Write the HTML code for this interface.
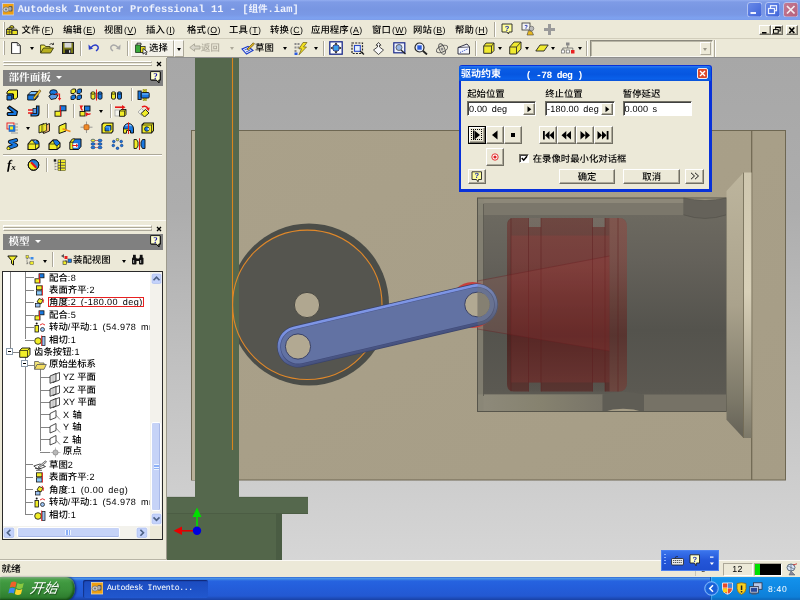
<!DOCTYPE html>
<html lang="zh-CN">
<head>
<meta charset="utf-8">
<title>Autodesk Inventor Professional 11 - [组件.iam]</title>
<style>
*{box-sizing:border-box;margin:0;padding:0}
html,body{width:800px;height:600px;overflow:hidden;background:#ece9d8}
body{position:relative;-webkit-font-smoothing:antialiased;text-rendering:geometricPrecision;font-family:"Liberation Sans","Noto Sans CJK SC",sans-serif;font-size:9.4px;color:#000;line-height:1}
#root{position:absolute;left:0;top:0;width:800px;height:600px;overflow:hidden;will-change:transform}
.a{position:absolute}
.t{position:absolute;white-space:pre;font-weight:500;font-family:"Liberation Sans","Noto Sans CJK SC",sans-serif;font-size:9.4px;line-height:12px;height:12px}
.t i{font-style:normal;font-family:"Liberation Sans",sans-serif;font-size:8.8px;letter-spacing:0.3px;margin-left:1.3px}
.m{position:absolute;white-space:pre;font-weight:500;font-family:"Liberation Mono","Noto Sans CJK SC",monospace;font-size:9.4px;line-height:12px;height:12px}
.m i{font-style:normal;font-family:"Liberation Sans",sans-serif;font-size:9.1px;letter-spacing:0.42px;word-spacing:1.7px}
#titlebar{left:0;top:0;width:800px;height:20.4px;background:linear-gradient(#93adf0 0,#7e9be6 2px,#7896e2 9px,#7a99e6 15px,#7ea2f0 18px,#7b9cea 20px)}
#titletext{left:17.700px;top:4.200px;height:12px;line-height:12px;color:#eef2fd;font-family:"Liberation Mono","Noto Sans CJK SC",monospace;font-size:10.4px;font-weight:bold;white-space:pre}
.t u{text-decoration:underline;text-decoration-thickness:0.8px;text-underline-offset:0.6px}
.sep{position:absolute;width:2px;border-left:1px solid #aca899;border-right:1px solid #fff}
.hsep{position:absolute;height:2px;border-top:1px solid #aca899;border-bottom:1px solid #fff}
.btn{position:absolute;background:#ece9d8;border:1px solid;border-color:#fff #716f64 #716f64 #fff;box-shadow:inset -1px -1px 0 #aca899}
.sunk{position:absolute;background:#fff;border:1px solid;border-color:#716f64 #fff #fff #716f64;box-shadow:inset 1px 1px 0 #404040}
.phead{position:absolute;left:3px;width:160px;height:16px;background:#808080}
.phead .t{color:#fff;font-weight:bold;font-size:9.8px}
.dd{position:absolute;width:0;height:0;border-left:2.5px solid transparent;border-right:2.5px solid transparent;border-top:3px solid #000}
.xpbtn{position:absolute;background:linear-gradient(#fff,#f3f1e8 70%,#dcd8c8);border:1px solid #6d7fa8;border-radius:2px}
</style>
</head>
<body>
<div id="root">
<div id="titlebar" class="a"></div>
<svg class="a" style="left:1.8px;top:3.2px" width="12.4" height="12.4" viewBox="0 0 12.4 12.4"><rect x="0.4" y="0.4" width="11.6" height="11.6" fill="#f0a010" stroke="#c8d4f4" stroke-width="0.8"/><rect x="6.5" y="3" width="4" height="5.5" rx="1" fill="#5a5a5a"/><ellipse cx="4" cy="6.5" rx="3" ry="2.6" fill="#c8c8c8" stroke="#666" stroke-width="0.6"/><ellipse cx="4" cy="6.5" rx="1.2" ry="1" fill="#777"/><ellipse cx="8" cy="5.8" rx="1.6" ry="2" fill="#aaa"/></svg>
<div id="titletext" class="a">Autodesk Inventor Professional 11 - [<span style="font-size:9.6px">组件</span>.iam]</div>
<svg class="a" style="left:746.5px;top:1.5px" width="15.5" height="15.5" viewBox="0 0 15.5 15.5"><defs><linearGradient id="g746" x1="0" y1="0" x2="1" y2="1"><stop offset="0" stop-color="#6a8be8"/><stop offset="1" stop-color="#3e63d8"/></linearGradient></defs><rect x="0.5" y="0.5" width="14.5" height="14.5" rx="2.5" fill="url(#g746)" stroke="#b9c8f4" stroke-width="0.9"/><rect x="3.5" y="10" width="5.5" height="2" fill="#eef2ff"/></svg>
<svg class="a" style="left:764.5px;top:1.5px" width="15.5" height="15.5" viewBox="0 0 15.5 15.5"><defs><linearGradient id="g764" x1="0" y1="0" x2="1" y2="1"><stop offset="0" stop-color="#6a8be8"/><stop offset="1" stop-color="#3e63d8"/></linearGradient></defs><rect x="0.5" y="0.5" width="14.5" height="14.5" rx="2.5" fill="url(#g764)" stroke="#b9c8f4" stroke-width="0.9"/><rect x="5.5" y="3.7" width="6" height="5" fill="none" stroke="#eef2ff" stroke-width="1.2"/><rect x="3.5" y="6.5" width="6" height="5" fill="#5074dd" stroke="#eef2ff" stroke-width="1.2"/></svg>
<svg class="a" style="left:782.5px;top:1.5px" width="15.5" height="15.5" viewBox="0 0 15.5 15.5"><defs><linearGradient id="g782" x1="0" y1="0" x2="1" y2="1"><stop offset="0" stop-color="#c47a92"/><stop offset="1" stop-color="#b5607c"/></linearGradient></defs><rect x="0.5" y="0.5" width="14.5" height="14.5" rx="2.5" fill="url(#g782)" stroke="#b9c8f4" stroke-width="0.9"/><path d="M4 4 L11.5 11.5 M11.5 4 L4 11.5" stroke="#f6eef2" stroke-width="1.7" fill="none"/></svg>
<div class="a" style="left:0;top:20px;width:800px;height:19px;background:#ece9d8"></div>
<div class="a" style="left:0;top:38px;width:800px;height:1px;background:#fbfaf5"></div>
<div class="a" style="left:0;top:37.5px;width:800px;height:0.7px;background:#d2cebc"></div>
<div class="a" style="left:2.5px;top:22px;width:2px;height:15px;border-left:1px solid #fff;border-right:1px solid #aca899"></div>
<svg class="a" style="left:5.5px;top:24.8px" width="12" height="10" viewBox="0 0 12 10"><path d="M3.5 3 Q3.5 0.6 5.8 0.6 Q8 0.6 8 3 Z" fill="#e8e020" stroke="#222" stroke-width="0.9"/><path d="M0.6 4.5 L1.8 3 H6 V4.5 M6.5 5.5 L7.5 4.2 H10.5 L11.4 5.5" fill="#f4f060" stroke="#222" stroke-width="0.8"/><rect x="0.6" y="4.5" width="5.4" height="5" fill="#e8e020" stroke="#222" stroke-width="0.9"/><rect x="6" y="5.5" width="5.4" height="4" fill="#e8e020" stroke="#222" stroke-width="0.9"/><path d="M0.6 7 H6 M3.3 4.5 V9.5" stroke="#222" stroke-width="0.6"/></svg>
<div class="t" style="left:21.5px;top:24.4px">文件<i>(<u>F</u>)</i></div>
<div class="t" style="left:63px;top:24.4px">编辑<i>(<u>E</u>)</i></div>
<div class="t" style="left:104px;top:24.4px">视图<i>(<u>V</u>)</i></div>
<div class="t" style="left:146px;top:24.4px">插入<i>(<u>I</u>)</i></div>
<div class="t" style="left:187px;top:24.4px">格式<i>(<u>O</u>)</i></div>
<div class="t" style="left:229px;top:24.4px">工具<i>(<u>T</u>)</i></div>
<div class="t" style="left:270px;top:24.4px">转换<i>(<u>C</u>)</i></div>
<div class="t" style="left:311px;top:24.4px">应用程序<i>(<u>A</u>)</i></div>
<div class="t" style="left:372px;top:24.4px">窗口<i>(<u>W</u>)</i></div>
<div class="t" style="left:413px;top:24.4px">网站<i>(<u>B</u>)</i></div>
<div class="t" style="left:455px;top:24.4px">帮助<i>(<u>H</u>)</i></div>
<div class="sep" style="left:494px;top:22px;height:15px"></div>
<svg class="a" style="left:501px;top:23px" width="12" height="12" viewBox="0 0 12 12"><path d="M1 1 H11 V9 H8 L7.5 11 L6 9 H1 Z" fill="#ffff9c" stroke="#222" stroke-width="0.9"/><text x="6" y="8" font-family="Liberation Sans,sans-serif" font-size="7.5" font-weight="bold" text-anchor="middle" fill="#1a2ab0">?</text></svg>
<svg class="a" style="left:521px;top:22px" width="15" height="14" viewBox="0 0 15 14"><rect x="1" y="1" width="8" height="7" fill="#f4f4f4" stroke="#333" stroke-width="0.8"/><text x="5" y="7" font-family="Liberation Sans,sans-serif" font-size="6" font-weight="bold" text-anchor="middle" fill="#1a2ab0">?</text><circle cx="10.5" cy="6.5" r="2.3" fill="#bbb" stroke="#555" stroke-width="0.6"/><path d="M6 13 L7.5 8.5 L11 9.5 L12.5 13 Z" fill="#e8b820" stroke="#444" stroke-width="0.6"/></svg>
<svg class="a" style="left:543px;top:23px" width="13" height="13" viewBox="0 0 13 13"><path d="M5 1 H8 V5 H12 V8 H8 V12 H5 V8 H1 V5 H5 Z" fill="#9a9a9a"/></svg>
<div class="btn" style="left:759px;top:24.5px;width:11.5px;height:10.8px"></div><svg class="a" style="left:759px;top:24.5px" width="11.5" height="10.8" viewBox="0 0 11.5 10.8"><rect x="3" y="7" width="4.5" height="1.6" fill="#000"/></svg>
<div class="btn" style="left:770.5px;top:24.5px;width:12.5px;height:10.8px"></div><svg class="a" style="left:770.5px;top:24.5px" width="12.5" height="10.8" viewBox="0 0 12.5 10.8"><rect x="4.7" y="2.2" width="4.5" height="3.8" fill="none" stroke="#000" stroke-width="1"/><rect x="2.5" y="4.6" width="4.7" height="3.6" fill="#ece9d8" stroke="#000" stroke-width="1"/><rect x="4.2" y="1.8" width="5.5" height="1.2" fill="#000"/></svg>
<div class="btn" style="left:786px;top:24.5px;width:12px;height:10.8px"></div><svg class="a" style="left:786px;top:24.5px" width="12" height="10.8" viewBox="0 0 12 10.8"><path d="M3.3 2.5 L8.3 8 M8.3 2.5 L3.3 8" stroke="#000" stroke-width="1.7"/></svg>
<div class="a" style="left:0;top:39px;width:800px;height:19px;background:#ece9d8"></div>
<div class="a" style="left:3px;top:41px;width:2px;height:14px;border-left:1px solid #fff;border-right:1px solid #aca899"></div>
<svg class="a" style="left:10.5px;top:41.5px" width="10" height="12.5" viewBox="0 0 10 12.5"><path d="M0.6 0.6 H6.3 L9.3 3.6 V11.8 H0.6 Z" fill="#fff" stroke="#222" stroke-width="1"/><path d="M6.3 0.6 V3.6 H9.3" fill="none" stroke="#222" stroke-width="0.7"/></svg>
<div class="dd" style="left:29.5px;top:47px;border-top-color:#000"></div>
<svg class="a" style="left:40px;top:42px" width="15" height="12" viewBox="0 0 15 12"><path d="M0.6 11 V3 H4.5 L5.5 4.5 H10 V6" fill="#f2ec50" stroke="#3a3a10" stroke-width="0.9"/><path d="M0.6 11 L3.5 6 H13.5 L10.5 11 Z" fill="#b8b020" stroke="#3a3a10" stroke-width="0.9"/><path d="M9.5 2.5 Q11.5 0.5 13.5 2.5 M13.5 2.5 L13.5 0.8 M13.5 2.5 L11.8 2.6" stroke="#222" stroke-width="0.8" fill="none"/></svg>
<svg class="a" style="left:62px;top:42px" width="12" height="12" viewBox="0 0 12 12"><rect x="0.5" y="0.5" width="11" height="11" fill="#7a7a18" stroke="#222" stroke-width="1"/><rect x="2.5" y="0.8" width="7" height="4.8" fill="#d8d8d8"/><rect x="3" y="7.5" width="6" height="3.8" fill="#222"/><rect x="7" y="8.2" width="1.3" height="2.5" fill="#ddd"/></svg>
<div class="sep" style="left:80px;top:41px;height:15px"></div>
<svg class="a" style="left:88px;top:43px" width="12" height="9" viewBox="0 0 12 9"><path d="M3 4.5 Q6.5 0.5 9.5 3 Q11.5 5.5 8 8" fill="none" stroke="#2a3cc8" stroke-width="1.4"/><path d="M0.5 1.5 L5 5.8 L0.8 6.8 Z" fill="#2a3cc8"/></svg>
<svg class="a" style="left:109px;top:43px" width="12" height="9" viewBox="0 0 12 9"><path d="M9 4.5 Q5.5 0.5 2.5 3 Q0.5 5.5 4 8" fill="none" stroke="#a8a8a8" stroke-width="1.4"/><path d="M11.5 1.5 L7 5.8 L11.2 6.8 Z" fill="#a8a8a8"/></svg>
<div class="sep" style="left:126.5px;top:41px;height:15px"></div>
<div class="a" style="left:130.5px;top:40px;width:43px;height:17px;border:1px solid;border-color:#fff #aca899 #aca899 #fff;background:#f3f1e9"></div>
<svg class="a" style="left:134.5px;top:42px" width="13" height="13" viewBox="0 0 13 13"><rect x="0.6" y="3" width="5" height="7.5" fill="#38a838" stroke="#1a3a1a" stroke-width="0.8"/><path d="M2 3 V1.2 H6 V3" fill="none" stroke="#222" stroke-width="0.9"/><rect x="5.6" y="4.5" width="4.5" height="6" fill="#e8e020" stroke="#222" stroke-width="0.8"/><path d="M8 6.5 L8 12.2 L9.5 10.8 L10.8 12.8 L11.8 12.2 L10.6 10.3 L12.3 10 Z" fill="#fff" stroke="#000" stroke-width="0.7"/></svg>
<div class="t" style="left:149px;top:42px">选择</div>
<div class="a" style="left:174px;top:40px;width:10px;height:17px;border:1px solid;border-color:#fff #aca899 #aca899 #fff;background:#f3f1e9"></div>
<div class="dd" style="left:176.5px;top:47.5px;border-top-color:#000"></div>
<svg class="a" style="left:188.5px;top:43px" width="12" height="9" viewBox="0 0 12 9"><path d="M0.8 4.5 L5.5 0.8 V3 H11 V6 H5.5 V8.2 Z" fill="#d8d5c8" stroke="#a8a595" stroke-width="0.9"/></svg>
<div class="t" style="left:201px;top:42px;color:#aca899">返回</div>
<div class="dd" style="left:229.5px;top:47px;border-top-color:#aca899"></div>
<svg class="a" style="left:240.5px;top:41.5px" width="14" height="13" viewBox="0 0 14 13"><path d="M1 7 L7 4.5 L12 8.5 L5.5 12 Z" fill="#e8f0ff" stroke="#1a3ac8" stroke-width="1.1"/><path d="M3.5 8 L7 6.5 M5 10 L9.5 8" stroke="#1a3ac8" stroke-width="0.8"/><path d="M6 7 L12.3 0.8 L13.5 2 L7.2 8.2 Z" fill="#e8c020" stroke="#5a4210" stroke-width="0.7"/></svg>
<div class="t" style="left:255px;top:42px">草图</div>
<div class="dd" style="left:283px;top:47px;border-top-color:#000"></div>
<svg class="a" style="left:293.5px;top:41.5px" width="14" height="13" viewBox="0 0 14 13"><g fill="#8a8a8a"><rect x="0.5" y="1" width="2" height="2"/><rect x="3.5" y="1" width="2" height="2"/><rect x="0.5" y="4.5" width="2" height="2"/><rect x="3.5" y="4.5" width="2" height="2"/><rect x="0.5" y="8" width="2" height="2"/></g><rect x="0.5" y="10.5" width="3" height="2.5" fill="#2a5ae0"/><path d="M9 0.5 L13 0.5 L9.5 5 L12.5 5 L5 12.8 L7.5 6.8 L5 6.8 Z" fill="#f2e020" stroke="#6a5a10" stroke-width="0.7"/></svg>
<div class="dd" style="left:313.5px;top:47px;border-top-color:#000"></div>
<div class="sep" style="left:322.5px;top:41px;height:15px"></div>
<svg class="a" style="left:328.5px;top:41px" width="14" height="14" viewBox="0 0 14 14"><rect x="0.8" y="0.8" width="12.4" height="12.4" fill="#fff" stroke="#1a2a8a" stroke-width="1.3"/><rect x="4.3" y="4.3" width="5.4" height="5.4" fill="#3aa0e8" stroke="#1a2a8a" stroke-width="0.6"/><path d="M7 1.5 L8.8 3.7 H5.2 Z M7 12.5 L8.8 10.3 H5.2 Z M1.5 7 L3.7 5.2 V8.8 Z M12.5 7 L10.3 5.2 V8.8 Z" fill="#111"/></svg>
<svg class="a" style="left:350.5px;top:41.5px" width="14" height="13" viewBox="0 0 14 13"><rect x="1" y="1" width="10.5" height="10.5" fill="none" stroke="#222" stroke-width="1.2" stroke-dasharray="2 1.2"/><rect x="3.5" y="3.5" width="5.8" height="5.8" fill="#e6f2ff" stroke="#2a4ac8" stroke-width="1.1"/><path d="M9 9 L13 12.5" stroke="#222" stroke-width="1.3"/></svg>
<svg class="a" style="left:372px;top:41.5px" width="13" height="13" viewBox="0 0 13 13"><path d="M6.5 0.5 L9 3.2 H7.5 V5 L11.5 8 L6.5 12.5 L1.5 8 L5.5 5 V3.2 H4 Z" fill="#f8f8f8" stroke="#222" stroke-width="0.8"/></svg>
<svg class="a" style="left:392.5px;top:41.5px" width="14" height="13" viewBox="0 0 14 13"><rect x="0.8" y="0.8" width="11" height="10" fill="#f0f4ff" stroke="#1a2a8a" stroke-width="1.2"/><circle cx="6" cy="5.5" r="3" fill="#9ab8e8" stroke="#333" stroke-width="0.7"/><path d="M8 8 L12.5 12" stroke="#222" stroke-width="1.4"/></svg>
<svg class="a" style="left:414px;top:41.5px" width="14" height="13" viewBox="0 0 14 13"><circle cx="5.5" cy="5.5" r="4.5" fill="#e8f0ff" stroke="#222" stroke-width="1.2"/><rect x="3.3" y="3.3" width="4.4" height="4.4" fill="#2a5ad8"/><path d="M8.8 8.8 L13 12.5" stroke="#222" stroke-width="1.8"/></svg>
<svg class="a" style="left:435px;top:41.5px" width="14" height="13" viewBox="0 0 14 13"><ellipse cx="7" cy="7" rx="6" ry="3" fill="none" stroke="#555" stroke-width="0.9" transform="rotate(-25 7 7)"/><ellipse cx="7" cy="7" rx="2.6" ry="5.6" fill="none" stroke="#555" stroke-width="0.9" transform="rotate(-25 7 7)"/><circle cx="7" cy="7" r="1.5" fill="#8a8a8a"/></svg>
<svg class="a" style="left:456.5px;top:41.5px" width="14" height="13" viewBox="0 0 14 13"><path d="M1 5.5 L10 2 L12.5 5 V12 H1 Z" fill="#f4f6ff" stroke="#223" stroke-width="0.9"/><path d="M1 5.5 L12.5 5" stroke="#223" stroke-width="0.7"/><path d="M3 10.5 L10.5 7" stroke="#2a4ac8" stroke-width="0.9" stroke-dasharray="1.3 1"/></svg>
<div class="sep" style="left:475px;top:41px;height:15px"></div>
<svg class="a" style="left:482.5px;top:42px" width="12" height="12" viewBox="0 0 12 12"><path d="M0.7 4 L3 1 H11 V8.5 L8.5 11.3 H0.7 Z" fill="#f0ea30" stroke="#222" stroke-width="0.9"/><path d="M0.7 4 H8.5 L11 1 M8.5 4 V11.3" fill="none" stroke="#222" stroke-width="0.8"/></svg>
<div class="dd" style="left:497.5px;top:47px;border-top-color:#000"></div>
<svg class="a" style="left:508.5px;top:41px" width="13" height="14" viewBox="0 0 13 14"><path d="M0.7 6 L5 1 H12 V8 L7.5 13 H0.7 Z" fill="#f0ea30" stroke="#222" stroke-width="0.9"/><path d="M0.7 6 H7.5 L12 1 M7.5 6 V13" fill="none" stroke="#222" stroke-width="0.8"/></svg>
<div class="dd" style="left:524.5px;top:47px;border-top-color:#000"></div>
<svg class="a" style="left:535px;top:43.5px" width="14" height="8" viewBox="0 0 14 8"><path d="M0.8 7 L5 1 H13.2 L9 7 Z" fill="#f0ea30" stroke="#222" stroke-width="0.9"/></svg>
<div class="dd" style="left:551px;top:47px;border-top-color:#000"></div>
<svg class="a" style="left:561px;top:41.5px" width="14" height="13" viewBox="0 0 14 13"><rect x="5" y="0.5" width="3.5" height="3" fill="#888"/><path d="M6.7 3.5 V6 M1.8 8 V6 H11.8 V8" fill="none" stroke="#666" stroke-width="0.8"/><rect x="0.3" y="8" width="3.2" height="3" fill="#fff" stroke="#666" stroke-width="0.7"/><rect x="5.2" y="8" width="3.2" height="3" fill="#fff" stroke="#666" stroke-width="0.7"/><rect x="10" y="8" width="3.5" height="3.5" fill="#e82020"/></svg>
<div class="dd" style="left:577.5px;top:47px;border-top-color:#000"></div>
<div class="sep" style="left:585.5px;top:41px;height:15px"></div>
<div class="a" style="left:590px;top:40px;width:122.5px;height:16.5px;border:1px solid;border-color:#8a887c #f8f7f0 #f8f7f0 #8a887c;background:#ece9d8;box-shadow:inset 1px 1px 0 #b8b5a5"></div>
<div class="a" style="left:699.5px;top:41.5px;width:11.5px;height:13.5px;border:1px solid;border-color:#fff #aca899 #aca899 #fff;background:#ece9d8"></div>
<div class="dd" style="left:702.5px;top:47.5px;border-top-color:#9a978a"></div>
<div class="sep" style="left:714px;top:40px;height:17px"></div>
<svg class="a" style="left:167px;top:58px" width="633" height="502" viewBox="167 58 633 502">
<defs>
<linearGradient id="bg" x1="0" y1="0" x2="0" y2="1"><stop offset="0" stop-color="#a7a7a7"/><stop offset="0.3" stop-color="#adadad"/><stop offset="0.6" stop-color="#c0c0c0"/><stop offset="1" stop-color="#d6d6d6"/></linearGradient>
<linearGradient id="plate" x1="0" y1="0" x2="1" y2="1"><stop offset="0" stop-color="#aaa18a"/><stop offset="1" stop-color="#a69d86"/></linearGradient>
<linearGradient id="hous" x1="0" y1="0" x2="0" y2="1"><stop offset="0" stop-color="#6f6c62"/><stop offset="0.3" stop-color="#64615a"/><stop offset="0.62" stop-color="#54534d"/><stop offset="0.9" stop-color="#5b5952"/><stop offset="1" stop-color="#65625a"/></linearGradient>
<linearGradient id="flg" x1="0" y1="0" x2="0" y2="1"><stop offset="0" stop-color="#bdb59d"/><stop offset="0.5" stop-color="#aaa28c"/><stop offset="0.85" stop-color="#7d7969"/><stop offset="1" stop-color="#646156"/></linearGradient>
<linearGradient id="flg2" x1="0" y1="0" x2="0" y2="1"><stop offset="0" stop-color="#cfc7af"/><stop offset="0.45" stop-color="#d8d0b8"/><stop offset="0.8" stop-color="#a8a18c"/><stop offset="1" stop-color="#7c7868"/></linearGradient>
<linearGradient id="leftstrip" x1="0" y1="0" x2="1" y2="0"><stop offset="0" stop-color="#c4c4c4" stop-opacity="0.4"/><stop offset="1" stop-color="#c4c4c4" stop-opacity="0"/></linearGradient>
<clipPath id="armclip"><path d="M298 346.5 L477 304.5" stroke-width="42"/></clipPath>
<linearGradient id="pshade" x1="0" y1="0" x2="0" y2="1"><stop offset="0" stop-color="#d09088" stop-opacity="0.1"/><stop offset="0.2" stop-color="#d09088" stop-opacity="0.06"/><stop offset="0.45" stop-color="#200000" stop-opacity="0.1"/><stop offset="0.68" stop-color="#200000" stop-opacity="0.26"/><stop offset="0.88" stop-color="#200000" stop-opacity="0.12"/><stop offset="1" stop-color="#200000" stop-opacity="0.04"/></linearGradient>
<linearGradient id="bwall" x1="0" y1="0" x2="1" y2="0"><stop offset="0" stop-color="#8e8a7b"/><stop offset="0.5" stop-color="#86826f"/><stop offset="1" stop-color="#787468"/></linearGradient>
<linearGradient id="armband" gradientUnits="userSpaceOnUse" x1="382.7" y1="305" x2="392.3" y2="346"><stop offset="0" stop-color="#8098e8"/><stop offset="0.15" stop-color="#7890e0"/><stop offset="0.5" stop-color="#6477b2"/><stop offset="0.85" stop-color="#4e5b8c"/><stop offset="1" stop-color="#45507c"/></linearGradient>
</defs>
<rect x="167" y="58" width="633" height="502" fill="url(#bg)"/>
<!-- plate -->
<rect x="191.5" y="130.5" width="594" height="349.5" fill="url(#plate)" stroke="#6e6752" stroke-width="1"/>
<rect x="192" y="131" width="3.5" height="349" fill="#b9b19a"/>
<line x1="751.7" y1="130" x2="751.7" y2="480" stroke="#6e6752" stroke-width="1.2"/>
<!-- housing -->
<rect x="477.5" y="198" width="249" height="213.5" fill="url(#hous)"/>
<rect x="477.5" y="198" width="206" height="17" fill="#7b776b"/>
<rect x="477.5" y="198" width="206" height="5" fill="#8d8879"/>
<rect x="477.5" y="394.5" width="249" height="17" fill="#767266"/><rect x="477.5" y="394.5" width="125" height="17" fill="url(#bwall)"/>
<rect x="477.5" y="198" width="6" height="213.5" fill="#8a8677" opacity="0.8"/><line x1="483.5" y1="204" x2="483.5" y2="396" stroke="#55534b" stroke-width="0.7"/>
<!-- top right notch -->
<path d="M683.5 198 Q705 202.5 726.5 198 L726.5 214.8 Q705 222 683.5 214.8 Z" fill="#65625a"/>
<path d="M683.5 197.5 H726.5 V198 Q705 202.5 683.5 198 Z" fill="#a89f88"/>
<path d="M683.5 198 Q705 202.5 726.5 198" fill="none" stroke="#4f4d46" stroke-width="0.6"/>
<path d="M683.5 214.8 Q705 222 726.5 214.8" fill="none" stroke="#4f4d46" stroke-width="0.6"/>
<!-- bottom notch -->
<path d="M602.5 412 L602.5 394.6 Q623 389 644 394.6 L644 412 Z" fill="#5f5d55"/>
<path d="M602.5 412.2 Q623 405.5 644 412.2 Z" fill="#a79e87"/>
<rect x="477.5" y="198" width="249" height="213.5" fill="none" stroke="#57554b" stroke-width="1"/>
<!-- piston (transparent red) -->
<g>
<path d="M514 218 H528.5 V227 H541 V218 H592.5 V227 H605 V218 H619 Q627 218 627 227 V382.5 Q627 391.5 619 391.5 H605 V382.5 H592.5 V391.5 H541 V382.5 H528.5 V391.5 H514 Q507 391.5 507 384 V225.5 Q507 218 514 218 Z" fill="#5c1614" fill-opacity="0.5"/>
<rect x="511" y="235.5" width="98.5" height="147" fill="#a03c3c" fill-opacity="0.27"/>
<path d="M609.5 218 H619 Q627 218 627 227 V382.5 Q627 391.5 619 391.5 H609.5 Z" fill="#d8a898" fill-opacity="0.16"/>
<rect x="507" y="218" width="120" height="173.5" rx="8" fill="url(#pshade)"/>
<g stroke="#5a1a1c" stroke-opacity="0.45" stroke-width="1">
<line x1="511" y1="218" x2="511" y2="391.5"/><line x1="528.5" y1="218" x2="528.5" y2="391.5"/><line x1="541" y1="218" x2="541" y2="391.5"/><line x1="592.5" y1="218" x2="592.5" y2="391.5"/><line x1="605" y1="218" x2="605" y2="391.5"/><line x1="618" y1="218" x2="618" y2="391.5"/>
</g>
<polygon points="477.5,281 609.5,256 609.5,351 477.5,329" fill="#d04848" fill-opacity="0.13"/>
<polyline points="477.5,281 609.5,256" stroke="#6a2022" stroke-opacity="0.5" fill="none" stroke-width="0.8"/>
<polyline points="477.5,329 609.5,351" stroke="#6a2022" stroke-opacity="0.5" fill="none" stroke-width="0.8"/>
</g>
<!-- pin red blob -->
<circle cx="472.5" cy="305" r="23" fill="#c8403c"/>
<!-- flange -->
<polygon points="726.5,191 743.5,172.5 743.5,438 726.5,419.7" fill="url(#flg)"/>
<rect x="743.5" y="172.5" width="8" height="265.5" fill="url(#flg2)"/>
<line x1="743.5" y1="172.5" x2="743.5" y2="438" stroke="#6e6752" stroke-width="0.8"/>
<!-- disc -->
<ellipse cx="309" cy="304.5" rx="80" ry="81" fill="#4b4d48"/>
<circle cx="307.3" cy="304.8" r="74.7" fill="#55554f"/>
<circle cx="307" cy="305" r="12.6" fill="#b0a790" stroke="#3c3c38" stroke-width="0.8"/>
<!-- green bar & base -->
<rect x="195" y="58" width="44" height="440" fill="#55684d"/>
<line x1="232.5" y1="58" x2="232.5" y2="450" stroke="#d8861e" stroke-width="1.1"/>
<rect x="167" y="497" width="141" height="17" fill="#55684d"/>
<rect x="167" y="513.5" width="115" height="47" fill="#53664a"/>
<rect x="276" y="513.5" width="6" height="47" fill="#4a5c43"/>
<line x1="167" y1="513.5" x2="308" y2="513.5" stroke="#4a5b42" stroke-width="0.8"/>
<line x1="167" y1="497.3" x2="195" y2="497.3" stroke="#4a5b42" stroke-width="0.6"/>
<line x1="239" y1="497.3" x2="308" y2="497.3" stroke="#4a5b42" stroke-width="0.6"/>
<circle cx="307.3" cy="304.8" r="74.7" fill="none" stroke="#e0882a" stroke-width="1.1"/>
<!-- arm -->
<path d="M298 346.5 L477 304.5" stroke="#3a446c" stroke-width="42" stroke-linecap="round" fill="none"/>
<path d="M298 346.5 L477 304.5" stroke="url(#armband)" stroke-width="40.8" stroke-linecap="round" fill="none"/>
<path d="M298 346.5 L477 304.5" stroke="#3c4673" stroke-opacity="0.75" stroke-width="35.6" stroke-linecap="round" fill="none"/>
<path d="M298 346.5 L477 304.5" stroke="#6272a3" stroke-width="34.2" stroke-linecap="round" fill="none"/>
<circle cx="298" cy="346.5" r="12.6" fill="#b2a992" stroke="#2f3862" stroke-width="0.9"/>
<circle cx="477" cy="304.5" r="12.3" fill="#b2a992" stroke="#2f3862" stroke-width="0.9"/>
<path d="M477.5 292.2 A12.3 12.3 0 0 1 477.5 316.8 Z" fill="#8c8676"/>
<path d="M477.5 283.5 A21 21 0 0 1 477.5 325.5 Z" fill="#77746a" fill-opacity="0.3"/>
<!-- triad -->
<line x1="197" y1="530.8" x2="197" y2="515" stroke="#00e000" stroke-width="1.6"/>
<polygon points="197,507.5 192.5,517 201.5,517" fill="#00e000"/>
<line x1="197" y1="530.8" x2="181" y2="530.8" stroke="#e00000" stroke-width="1.6"/>
<polygon points="173.5,530.8 182,526.5 182,535" fill="#e80000"/>
<circle cx="197" cy="530.8" r="4.2" fill="#0000e0"/>
</svg>

<div class="a" style="left:167px;top:57.3px;width:633px;height:1px;background:#8e8e8e"></div>
<div class="a" style="left:166.3px;top:58px;width:1px;height:502px;background:#9d9a8c"></div>
<div class="a" style="left:3px;top:60.5px;width:149px;height:2.4px;border:1px solid;border-color:#fff #aca899 #aca899 #fff"></div><div class="a" style="left:3px;top:63.5px;width:149px;height:2.4px;border:1px solid;border-color:#fff #aca899 #aca899 #fff"></div><svg class="a" style="left:155.5px;top:61px" width="6" height="6" viewBox="0 0 6 6"><path d="M1 1 L5 5 M5 1 L1 5" stroke="#000" stroke-width="1.3"/></svg>
<div class="phead" style="top:69.5px"></div><div class="t" style="left:8.5px;top:72.8px;color:#fff;font-weight:bold;font-size:10.6px;font-family:'Liberation Serif','Noto Serif CJK SC',serif">部件面板</div><div class="dd" style="left:55.5px;top:76px;border-top-color:#fff;border-left-width:3.2px;border-right-width:3.2px;border-top-width:3.5px"></div><svg class="a" style="left:149.5px;top:71px" width="11.5" height="12.5" viewBox="0 0 11.5 12.5"><path d="M0.6 0.6 H10.2 V9 H8.8 L9 11.8 L6.3 9 H0.6 Z" fill="#ffffd0" stroke="#1a1a1a" stroke-width="1"/><path d="M1.2 9.3 H6.3 L9 12 L9.2 9.3 H10.5 V1.2" fill="none" stroke="#000" stroke-width="0.6"/><text x="5.4" y="8" font-family="Liberation Serif,serif" font-size="9" font-weight="bold" text-anchor="middle" fill="#1a1ab0">?</text></svg>
<svg class="a" style="left:5.8px;top:88.7px" width="13" height="12" viewBox="0 0 13 12"><path d="M1 3 L3 1 H11.5 V8.5 L9.5 10 H7.5 V5 H1 Z" fill="#f2ee28" stroke="#111" stroke-width="1"/><path d="M1 6.5 L2.5 5 H7 V9.5 L5.5 11 H1 Z" fill="#1878e0" stroke="#111" stroke-width="1"/><path d="M1 6.5 H5.5 V11 M5.5 6.5 L7 5" fill="none" stroke="#111" stroke-width="0.7"/></svg>
<svg class="a" style="left:26.5px;top:88.7px" width="15" height="12" viewBox="0 0 15 12"><path d="M0.7 6 L4 2.5 H11 L8 6 Z" fill="#7ac0ff" stroke="#111" stroke-width="0.9"/><path d="M0.7 6 H8 V11 H0.7 Z" fill="#1878e0" stroke="#111" stroke-width="0.9"/><path d="M8 6 L11 2.5 V7.5 L8 11 Z" fill="#0a4aa0" stroke="#111" stroke-width="0.9"/><path d="M6 9 L12.5 0.8 L14 2 L7.5 10.2 Z" fill="#f0c830" stroke="#5a4010" stroke-width="0.6"/></svg>
<svg class="a" style="left:47.5px;top:88.7px" width="14" height="12" viewBox="0 0 14 12"><ellipse cx="5.5" cy="3.5" rx="3.8" ry="2.8" fill="#1878e0" stroke="#111" stroke-width="0.9"/><path d="M0.8 7 L4 5 L10 6 L8 9.5 L3 10.5 Z" fill="#5a9ae8" stroke="#111" stroke-width="0.9"/><path d="M7 5 H11.5 V9.5" fill="none" stroke="#e81818" stroke-width="1.2"/><path d="M9.8 9 H13.2 L11.5 11.8 Z" fill="#e81818"/></svg>
<svg class="a" style="left:69.75px;top:88.45px" width="12.5" height="12.5" viewBox="0 0 12.5 12.5"><path d="M1 2.5 L2.5 1 H5.5 V4 L4 5.5 H1 Z" fill="#f2ee28" stroke="#111" stroke-width="0.9"/><path d="M7 2.5 L8.5 1 H11.5 V4 L10 5.5 H7 Z" fill="#1878e0" stroke="#111" stroke-width="0.9"/><path d="M1 8.5 L2.5 7 H5.5 V10 L4 11.5 H1 Z" fill="#1878e0" stroke="#111" stroke-width="0.9"/><path d="M7 8.5 L8.5 7 H11.5 V10 L10 11.5 H7 Z" fill="#1878e0" stroke="#111" stroke-width="0.9"/></svg>
<svg class="a" style="left:90.2px;top:88.7px" width="13" height="12" viewBox="0 0 13 12"><path d="M1 4 V9 A2 1.2 0 0 0 5 9 V4 Z" fill="#f2ee28" stroke="#111" stroke-width="0.9"/><ellipse cx="3" cy="4" rx="2" ry="1.2" fill="#f2ee28" stroke="#111" stroke-width="0.8"/><path d="M8 4 V9 A2 1.2 0 0 0 12 9 V4 Z" fill="#1878e0" stroke="#111" stroke-width="0.9"/><ellipse cx="10" cy="4" rx="2" ry="1.2" fill="#1878e0" stroke="#111" stroke-width="0.8"/><line x1="6.5" y1="0.5" x2="6.5" y2="11.5" stroke="#e81818" stroke-width="1"/></svg>
<svg class="a" style="left:110.2px;top:88.7px" width="13" height="12" viewBox="0 0 13 12"><path d="M1.5 4 V9 A2 1.2 0 0 0 5.5 9 V4 Z" fill="#f2ee28" stroke="#111" stroke-width="0.9"/><ellipse cx="3.5" cy="4" rx="2" ry="1.2" fill="#f2ee28" stroke="#111" stroke-width="0.8"/><path d="M7.5 4 V9 A2 1.2 0 0 0 11.5 9 V4 Z" fill="#1878e0" stroke="#111" stroke-width="0.9"/><ellipse cx="9.5" cy="4" rx="2" ry="1.2" fill="#1878e0" stroke="#111" stroke-width="0.8"/></svg>
<div class="sep" style="left:130.5px;top:88px;height:13px"></div>
<svg class="a" style="left:137px;top:88.7px" width="13" height="12" viewBox="0 0 13 12"><rect x="6" y="0.5" width="3.5" height="11" fill="#f2ee28" stroke="#8a8a20" stroke-width="0.5"/><path d="M6 0.5 L9.5 3 M9.5 0.5 L6 3 M6 9 L9.5 11.5 M9.5 9 L6 11.5" stroke="#7a7a10" stroke-width="0.6"/><rect x="1" y="2" width="3.2" height="8.5" fill="#1878e0" stroke="#111" stroke-width="0.9"/><rect x="4.2" y="3.5" width="8" height="5.5" rx="1" fill="#1878e0" stroke="#111" stroke-width="0.9"/><path d="M5 5 H11.5" stroke="#8ac8ff" stroke-width="0.9"/></svg>
<svg class="a" style="left:5.8px;top:105px" width="13" height="12" viewBox="0 0 13 12"><path d="M1.5 3 L3.5 1 L11.5 6.5 L10.5 10.5 H2 Q0.5 9 2 7.5 H7 Z" fill="#1878e0" stroke="#111" stroke-width="1.2" stroke-linejoin="round"/></svg>
<svg class="a" style="left:27px;top:105px" width="13" height="12" viewBox="0 0 13 12"><path d="M9.5 1 H12 V8 Q12 11 9 11 H4 V8.5 H9.5 Z" fill="#1878e0" stroke="#111" stroke-width="1.1"/><path d="M1 5 H8 M1 8 H6" stroke="#e81818" stroke-width="1.3"/><rect x="6" y="3.5" width="3.5" height="5" fill="#5a9ae8" stroke="#111" stroke-width="0.7"/></svg>
<div class="sep" style="left:46.5px;top:104px;height:14px"></div>
<svg class="a" style="left:53.5px;top:105px" width="13" height="12" viewBox="0 0 13 12"><rect x="6" y="0.8" width="6" height="5" fill="#1878e0" stroke="#111" stroke-width="0.9"/><rect x="1" y="6.2" width="6" height="5" fill="#f2ee28" stroke="#111" stroke-width="0.9"/><path d="M6.5 1 V11" stroke="#e81818" stroke-width="0.9"/></svg>
<div class="sep" style="left:72.5px;top:104px;height:14px"></div>
<svg class="a" style="left:78px;top:105px" width="14" height="12" viewBox="0 0 14 12"><rect x="6.5" y="1" width="5.5" height="5" fill="#1878e0" stroke="#111" stroke-width="0.9"/><rect x="2" y="6.5" width="5" height="4.5" fill="#f2ee28" stroke="#111" stroke-width="0.9"/><path d="M4.5 5.5 Q2 3 3.5 0.8" fill="none" stroke="#e81818" stroke-width="1.3"/><path d="M1.5 0.5 L5.5 0.5 L3 3.5 Z" fill="#e81818"/><path d="M8 8 Q10.5 10.5 12.5 8.5" fill="none" stroke="#e81818" stroke-width="1.3"/><path d="M8 11.5 L7.5 7.5 L11 9 Z" fill="#e81818"/></svg>
<div class="dd" style="left:98.5px;top:110px;border-top-color:#000"></div>
<div class="sep" style="left:109.5px;top:104px;height:14px"></div>
<svg class="a" style="left:114px;top:105px" width="13" height="12" viewBox="0 0 13 12"><rect x="1" y="5" width="5" height="6" fill="#f4f4ee" stroke="#999" stroke-width="0.7"/><path d="M5.5 6 L7 4.5 H12 V9.5 L10.5 11.3 H5.5 Z" fill="#f2ee28" stroke="#111" stroke-width="0.9"/><path d="M5.5 6 H10.5 V11.3 M10.5 6 L12 4.5" fill="none" stroke="#111" stroke-width="0.7"/><path d="M1 2.2 H8.5" stroke="#e81818" stroke-width="1.6"/><path d="M8 0 L11.5 2.2 L8 4.4 Z" fill="#e81818"/></svg>
<svg class="a" style="left:137px;top:104.75px" width="13" height="12.5" viewBox="0 0 13 12.5"><path d="M1 7 L4.5 3.5 L8 7 L4.5 10.5 Z" fill="#f0f0e8" stroke="#999" stroke-width="0.7"/><path d="M4 8.5 L8.5 4.5 L12 8 L7.5 12 Z" fill="#f2ee28" stroke="#111" stroke-width="0.9"/><path d="M5 2 Q9 0 11 3.5" fill="none" stroke="#e81818" stroke-width="1.6"/><path d="M9 3.5 L12.8 2.5 L11.8 6 Z" fill="#e81818"/></svg>
<svg class="a" style="left:5.5px;top:121.5px" width="13" height="12" viewBox="0 0 13 12"><rect x="1" y="1" width="7" height="6" fill="none" stroke="#e81818" stroke-width="0.9"/><rect x="3" y="3.5" width="6" height="6" fill="#1878e0" stroke="#3a6ab0" stroke-width="0.7"/><rect x="4" y="4.5" width="3" height="3" fill="#f2ee28"/><path d="M9 2 H12 M9 5 H12 M9 8 H12 M5 11 H12" stroke="#888" stroke-width="0.8"/></svg>
<div class="dd" style="left:26px;top:126.5px;border-top-color:#000"></div>
<svg class="a" style="left:37.5px;top:121.5px" width="13" height="12" viewBox="0 0 13 12"><path d="M1 3.5 L6 1.5 V9 L1 11 Z" fill="#f2ee28" stroke="#111" stroke-width="0.9"/><path d="M5.5 4 L11.5 1.5 V9 L5.5 11.5 Z" fill="#f0b070" stroke="#111" stroke-width="0.9"/><path d="M4 2.8 L8.5 1 V8.5 L4 10.5 Z" fill="#f2ee28" fill-opacity="0.85" stroke="#111" stroke-width="0.7"/></svg>
<svg class="a" style="left:58px;top:121.5px" width="13" height="12" viewBox="0 0 13 12"><path d="M1 4 L8 1 V9 L1 11.5 Z" fill="#f2ee28" stroke="#111" stroke-width="1"/><path d="M4.5 6.8 L12.5 9.5" stroke="#f08a18" stroke-width="1.5"/></svg>
<svg class="a" style="left:79.5px;top:121.25px" width="13" height="12.5" viewBox="0 0 13 12.5"><path d="M6.5 0.5 V12 M0.5 6.2 H12.5" stroke="#888" stroke-width="0.8"/><rect x="4" y="3.7" width="5" height="5" rx="1" fill="#f08a28" stroke="#a05010" stroke-width="0.7"/></svg>
<svg class="a" style="left:100.5px;top:121.5px" width="13" height="12" viewBox="0 0 13 12"><path d="M1 2.5 L2.5 1 H12 V9 L10.5 11 H1 Z" fill="#f2ee28" stroke="#111" stroke-width="1.1"/><path d="M4 5 L5.5 3.5 H10 V7.5 L8.5 9 H4 Z" fill="#1878e0" stroke="#111" stroke-width="0.8"/><path d="M4 5 H8.5 V9" fill="none" stroke="#7ac0ff" stroke-width="0.7"/></svg>
<svg class="a" style="left:121.5px;top:121.5px" width="13" height="12" viewBox="0 0 13 12"><path d="M1.5 7 A5 5.5 0 0 1 11.5 7 V11 H8.5 V8.5 H4.5 V11 H1.5 Z" fill="#1878e0" stroke="#111" stroke-width="1"/><path d="M1.5 7 H6.5 V8.5 H4.5 V11 H1.5 Z" fill="#f2ee28" stroke="#111" stroke-width="0.7"/><path d="M3.5 4 Q6.5 1.8 9.5 4" fill="none" stroke="#8ac8ff" stroke-width="1.1"/><path d="M6.5 0.3 V12" stroke="#e81818" stroke-width="1"/></svg>
<svg class="a" style="left:141px;top:121.5px" width="13" height="12" viewBox="0 0 13 12"><path d="M1 3 L3 1 H12.5 V8.5 L10.5 11 H1 Z" fill="#f2ee28" stroke="#111" stroke-width="1.1"/><path d="M1 3 H10.5 V11 M10.5 3 L12.5 1" fill="none" stroke="#111" stroke-width="0.7"/><circle cx="5.8" cy="7" r="2.3" fill="#1878e0" stroke="#111" stroke-width="0.7"/><path d="M5.8 7 L8 6 V8 Z" fill="#fff"/></svg>
<svg class="a" style="left:5.5px;top:138px" width="13" height="12" viewBox="0 0 13 12"><polyline points="10,2.2 4,3.8 10,7.3 3.5,9.5" fill="none" stroke="#111" stroke-width="4.2" stroke-linejoin="round" stroke-linecap="round"/><polyline points="10,2.2 4,3.8 10,7.3 3.5,9.5" fill="none" stroke="#1878e0" stroke-width="2.4" stroke-linejoin="round" stroke-linecap="round"/><circle cx="2.5" cy="10.3" r="1.6" fill="#f2ee28" stroke="#111" stroke-width="0.7"/></svg>
<svg class="a" style="left:27px;top:138px" width="13" height="12" viewBox="0 0 13 12"><path d="M1 6 L4.5 2 H9 Q12 2.5 12 6 V9 L9 11.5 H1 Z" fill="#f2ee28" stroke="#111" stroke-width="1.1"/><path d="M1 6 H8.5 V11.5" fill="none" stroke="#111" stroke-width="0.7"/><path d="M5.5 2.3 H9 Q11.7 2.8 11.7 6 L8.7 6.2 Q8.5 5 7.5 5.2 Z" fill="#1878e0" stroke="#111" stroke-width="0.6"/><path d="M7.5 3.2 L9 2.8" stroke="#b8e0ff" stroke-width="0.8"/></svg>
<svg class="a" style="left:48px;top:138px" width="13" height="12" viewBox="0 0 13 12"><path d="M1 6 L5 2 H9 L12 5 V9 L9 11.5 H1 Z" fill="#f2ee28" stroke="#111" stroke-width="1.1"/><path d="M1 6 H6.5 L9 8 V11.5" fill="none" stroke="#111" stroke-width="0.7"/><path d="M5 2 H9 L12 5 L9 8 L6.5 6 Z" fill="#1878e0" stroke="#111" stroke-width="0.7"/></svg>
<svg class="a" style="left:69px;top:138px" width="13" height="12" viewBox="0 0 13 12"><path d="M1 4 L3.5 1 H12 V8.5 L9.5 11.5 H1 Z" fill="#1878e0" stroke="#111" stroke-width="1"/><path d="M1 4 H4 V11.5 H1 Z" fill="#f2ee28" stroke="#111" stroke-width="0.7"/><path d="M1 4 L3.5 1 H6 L4 4 Z" fill="#f2ee28" stroke="#111" stroke-width="0.6"/><rect x="4" y="5" width="5" height="5" fill="#fff" stroke="#3a6ab0" stroke-width="0.5"/><path d="M3 7.5 H8" stroke="#e81818" stroke-width="1"/><path d="M7 5.8 L9.3 7.5 L7 9.2 Z" fill="#e81818"/></svg>
<svg class="a" style="left:90.2px;top:138px" width="13" height="12" viewBox="0 0 13 12"><path d="M5 2.5 H8 M5 6 H8 M5 9.5 H8" stroke="#e05050" stroke-width="0.7"/><ellipse cx="3" cy="6" rx="2" ry="1.3" fill="#1878e0" stroke="#0a2a70" stroke-width="0.6"/><ellipse cx="3" cy="9.5" rx="2" ry="1.3" fill="#1878e0" stroke="#0a2a70" stroke-width="0.6"/><ellipse cx="10" cy="2.5" rx="2" ry="1.3" fill="#1878e0" stroke="#0a2a70" stroke-width="0.6"/><ellipse cx="10" cy="6" rx="2" ry="1.3" fill="#1878e0" stroke="#0a2a70" stroke-width="0.6"/><ellipse cx="10" cy="9.5" rx="2" ry="1.3" fill="#1878e0" stroke="#0a2a70" stroke-width="0.6"/><ellipse cx="3" cy="2.5" rx="2" ry="1.3" fill="#f2ee28" stroke="#0a2a70" stroke-width="0.6"/></svg>
<svg class="a" style="left:111.2px;top:138px" width="13" height="12" viewBox="0 0 13 12"><circle cx="10.2" cy="3.5" r="1.3" fill="#1878e0" stroke="#0a2a70" stroke-width="0.6"/><circle cx="10.7" cy="7.5" r="1.3" fill="#1878e0" stroke="#0a2a70" stroke-width="0.6"/><circle cx="6.5" cy="10.3" r="1.3" fill="#1878e0" stroke="#0a2a70" stroke-width="0.6"/><circle cx="2.3" cy="7.5" r="1.3" fill="#1878e0" stroke="#0a2a70" stroke-width="0.6"/><circle cx="2.8" cy="3.5" r="1.3" fill="#1878e0" stroke="#0a2a70" stroke-width="0.6"/><circle cx="6.5" cy="1.6" r="1.3" fill="#f2ee28" stroke="#0a2a70" stroke-width="0.6"/></svg>
<svg class="a" style="left:132.5px;top:138px" width="13" height="12" viewBox="0 0 13 12"><path d="M1 1.5 H3.5 L5 4 V8 L3.5 10.5 H1 Z" fill="#f2ee28" stroke="#111" stroke-width="0.9"/><path d="M12 1.5 H9.5 L8 4 V8 L9.5 10.5 H12 Z" fill="#1878e0" stroke="#111" stroke-width="0.9"/><line x1="6.5" y1="0.3" x2="6.5" y2="12" stroke="#e81818" stroke-width="1"/></svg>
<div class="hsep" style="left:3px;top:153.5px;width:159px"></div>
<div class="t" style="left:7px;top:158.5px;font-family:'Liberation Serif',serif;font-style:italic;font-weight:bold;font-size:13px">f<span style="font-size:9px;position:relative;top:1.5px">x</span></div>
<svg class="a" style="left:27.2px;top:159px" width="13" height="12" viewBox="0 0 13 12"><circle cx="6.5" cy="6" r="5.3" fill="#f2ee28" stroke="#111" stroke-width="1"/><path d="M6.5 6 L2.7 2.3 A5.3 5.3 0 0 1 10.3 2.3 Z" fill="#1878e0"/><path d="M6.5 6 L10.3 2.3 A5.3 5.3 0 0 1 10.3 9.7 Z" fill="#1878e0" opacity="0.9"/><circle cx="6.5" cy="6" r="5.3" fill="none" stroke="#111" stroke-width="1"/><path d="M3.3 4 L4.8 2.5 L10 8 L8.5 9.5 Z" fill="#e81818"/></svg>
<div class="sep" style="left:45.5px;top:158px;height:14px"></div>
<svg class="a" style="left:53px;top:159px" width="13" height="12" viewBox="0 0 13 12"><rect x="0.8" y="0.3" width="2.4" height="2.4" fill="#111"/><path d="M2 2.5 V11 M2 4.5 H5 M2 7.5 H5 M2 10.5 H5" stroke="#777" stroke-width="0.8" stroke-dasharray="0.9 0.6" fill="none"/><g fill="#f2ee28" stroke="#333" stroke-width="0.5"><rect x="5" y="0.8" width="7.5" height="2.5"/><rect x="5" y="3.6" width="7.5" height="2.5"/><rect x="5" y="6.4" width="7.5" height="2.5"/><rect x="5" y="9.2" width="7.5" height="2.5"/></g><path d="M7.5 0.8 V11.7" stroke="#333" stroke-width="0.9"/></svg>
<div class="a" style="left:0;top:220.2px;width:166px;height:1px;background:#fbfaf4"></div>
<div class="a" style="left:3px;top:225.3px;width:149px;height:2.4px;border:1px solid;border-color:#fff #aca899 #aca899 #fff"></div><div class="a" style="left:3px;top:228.3px;width:149px;height:2.4px;border:1px solid;border-color:#fff #aca899 #aca899 #fff"></div><svg class="a" style="left:155.5px;top:225.8px" width="6" height="6" viewBox="0 0 6 6"><path d="M1 1 L5 5 M5 1 L1 5" stroke="#000" stroke-width="1.3"/></svg>
<div class="phead" style="top:233.7px"></div><div class="t" style="left:8.5px;top:237px;color:#fff;font-weight:bold;font-size:10.6px;font-family:'Liberation Serif','Noto Serif CJK SC',serif">模型</div><div class="dd" style="left:34.5px;top:240.2px;border-top-color:#fff;border-left-width:3.2px;border-right-width:3.2px;border-top-width:3.5px"></div><svg class="a" style="left:149.5px;top:235.2px" width="11.5" height="12.5" viewBox="0 0 11.5 12.5"><path d="M0.6 0.6 H10.2 V9 H8.8 L9 11.8 L6.3 9 H0.6 Z" fill="#ffffd0" stroke="#1a1a1a" stroke-width="1"/><path d="M1.2 9.3 H6.3 L9 12 L9.2 9.3 H10.5 V1.2" fill="none" stroke="#000" stroke-width="0.6"/><text x="5.4" y="8" font-family="Liberation Serif,serif" font-size="9" font-weight="bold" text-anchor="middle" fill="#1a1ab0">?</text></svg>
<svg class="a" style="left:6.5px;top:254.5px" width="11" height="11" viewBox="0 0 11 11"><path d="M0.8 1 H10.2 L6.5 5.5 V10 L4.5 8.5 V5.5 Z" fill="#f2ee28" stroke="#111" stroke-width="1"/></svg>
<svg class="a" style="left:25px;top:254.5px" width="10" height="11" viewBox="0 0 10 11"><path d="M2 1 V9.5 M2 3 H5 M2 8 H5" stroke="#444" stroke-width="0.8" stroke-dasharray="1 0.8" fill="none"/><rect x="1" y="0.5" width="2.5" height="2.5" fill="#f2ee28" stroke="#555" stroke-width="0.5"/><rect x="5" y="6.5" width="3.5" height="3" fill="#f2ee28" stroke="#555" stroke-width="0.5"/><rect x="5.5" y="2" width="3" height="2.5" fill="#3a8ae8"/></svg>
<div class="dd" style="left:42.5px;top:259.5px;border-top-color:#000"></div>
<div class="sep" style="left:51.5px;top:252px;height:15px"></div>
<svg class="a" style="left:60px;top:253px" width="13" height="13" viewBox="0 0 13 13"><path d="M1 3 L4 1 L4 5 Z" fill="#555"/><rect x="4.5" y="3" width="3" height="3" fill="#e82020"/><rect x="3" y="8" width="3.5" height="3.5" fill="#f2ee28" stroke="#333" stroke-width="0.6"/><rect x="8" y="6" width="3.5" height="3.5" fill="#1878e0" stroke="#333" stroke-width="0.6"/><path d="M6 7 V9 H8" stroke="#333" stroke-width="0.7" fill="none"/></svg>
<div class="t" style="left:73px;top:253.5px">装配视图</div>
<div class="dd" style="left:121.5px;top:259.5px;border-top-color:#000"></div>
<svg class="a" style="left:130.5px;top:254px" width="14" height="11" viewBox="0 0 14 11"><rect x="1" y="3.5" width="4.5" height="7" rx="1" fill="#111"/><rect x="8" y="3.5" width="4.5" height="7" rx="1" fill="#111"/><rect x="2" y="0.8" width="2.8" height="3.5" fill="#111"/><rect x="8.8" y="0.8" width="2.8" height="3.5" fill="#111"/><rect x="5" y="4.5" width="3.5" height="2.5" fill="#111"/><rect x="2" y="6" width="1.2" height="3" fill="#999"/><rect x="9" y="6" width="1.2" height="3" fill="#999"/></svg>
<div class="a" style="left:2.2px;top:270.8px;width:160.8px;height:268.7px;background:#fff;border:0.9px solid #2a2a2a"></div>
<div class="a" style="left:9.5px;top:271px;width:0;height:77.44px;border-left:0.9px solid #858585"></div>
<div class="a" style="left:24.5px;top:271px;width:0;height:67.94999999999999px;border-left:0.9px solid #858585"></div>
<div class="a" style="left:24.5px;top:277.1px;width:9.5px;height:0;border-top:0.9px solid #858585"></div>
<div class="a" style="left:24.5px;top:289.59px;width:9.5px;height:0;border-top:0.9px solid #858585"></div>
<div class="a" style="left:24.5px;top:302.08px;width:9.5px;height:0;border-top:0.9px solid #858585"></div>
<div class="a" style="left:24.5px;top:314.57px;width:9.5px;height:0;border-top:0.9px solid #858585"></div>
<div class="a" style="left:24.5px;top:327.06px;width:9.5px;height:0;border-top:0.9px solid #858585"></div>
<div class="a" style="left:24.5px;top:339.55px;width:9.5px;height:0;border-top:0.9px solid #858585"></div>
<div class="a" style="left:13px;top:352.04px;width:6px;height:0;border-top:0.9px solid #858585"></div>
<div class="a" style="left:24.5px;top:356.44px;width:0;height:157.36999999999995px;border-left:0.9px solid #858585"></div>
<div class="a" style="left:28px;top:364.53px;width:6px;height:0;border-top:0.9px solid #858585"></div>
<div class="a" style="left:39.5px;top:368.93px;width:0;height:82.43px;border-left:0.9px solid #858585"></div>
<div class="a" style="left:39.5px;top:377.02px;width:10.5px;height:0;border-top:0.9px solid #858585"></div>
<div class="a" style="left:39.5px;top:389.51px;width:10.5px;height:0;border-top:0.9px solid #858585"></div>
<div class="a" style="left:39.5px;top:402px;width:10.5px;height:0;border-top:0.9px solid #858585"></div>
<div class="a" style="left:39.5px;top:414.49px;width:10.5px;height:0;border-top:0.9px solid #858585"></div>
<div class="a" style="left:39.5px;top:426.98px;width:10.5px;height:0;border-top:0.9px solid #858585"></div>
<div class="a" style="left:39.5px;top:439.47px;width:10.5px;height:0;border-top:0.9px solid #858585"></div>
<div class="a" style="left:39.5px;top:451.96px;width:10.5px;height:0;border-top:0.9px solid #858585"></div>
<div class="a" style="left:24.5px;top:464.45px;width:8.5px;height:0;border-top:0.9px solid #858585"></div>
<div class="a" style="left:24.5px;top:476.94px;width:8.5px;height:0;border-top:0.9px solid #858585"></div>
<div class="a" style="left:24.5px;top:489.43px;width:8.5px;height:0;border-top:0.9px solid #858585"></div>
<div class="a" style="left:24.5px;top:501.92px;width:8.5px;height:0;border-top:0.9px solid #858585"></div>
<div class="a" style="left:24.5px;top:514.41px;width:8.5px;height:0;border-top:0.9px solid #858585"></div>
<div class="a" style="left:6px;top:347.94px;width:7px;height:7px;background:#fff;border:1px solid #8a9aaa"></div><div class="a" style="left:7.7px;top:350.94px;width:3.6px;height:1px;background:#000"></div>
<div class="a" style="left:21px;top:360.43px;width:7px;height:7px;background:#fff;border:1px solid #8a9aaa"></div><div class="a" style="left:22.7px;top:363.43px;width:3.6px;height:1px;background:#000"></div>
<div class="a" style="left:3px;top:271px;width:146.5px;height:254.5px;overflow:hidden">
<svg class="a" style="left:31px;top:1.5px" width="11" height="11" viewBox="0 0 11 11"><rect x="5" y="0.8" width="5" height="4" fill="#1878e0" stroke="#111" stroke-width="0.8"/><rect x="1" y="5.8" width="5" height="4.2" fill="#f2ee28" stroke="#111" stroke-width="0.8"/><path d="M5.5 1 V10" stroke="#e81818" stroke-width="0.8"/></svg><div class="m" style="left:46px;top:0.5px">配合<i>:8</i></div>
<svg class="a" style="left:31px;top:13.99px" width="11" height="11" viewBox="0 0 11 11"><rect x="2.5" y="0.8" width="5.5" height="4" fill="#f2ee28" stroke="#111" stroke-width="0.8"/><rect x="2.5" y="5.8" width="5.5" height="4.2" fill="#8ac8f8" stroke="#111" stroke-width="0.8"/><path d="M8.5 0.5 V10.5" stroke="#e81818" stroke-width="0.8"/></svg><div class="m" style="left:46px;top:12.99px">表面齐平<i>:2</i></div>
<svg class="a" style="left:31px;top:26.48px" width="11" height="11" viewBox="0 0 11 11"><path d="M5 1.5 L9 3 L7 7 L3 5 Z" fill="#f2ee28" stroke="#111" stroke-width="0.8"/><rect x="1.5" y="6.5" width="4.5" height="3.5" fill="#9ac0f0" stroke="#111" stroke-width="0.7"/><path d="M8 0.8 Q10.5 3 9 6" stroke="#e81818" stroke-width="0.9" fill="none"/></svg><div class="m" style="left:46px;top:25.48px">角度<i>:2 (-180.00 deg)</i></div>
<svg class="a" style="left:31px;top:38.97px" width="11" height="11" viewBox="0 0 11 11"><rect x="5" y="0.8" width="5" height="4" fill="#1878e0" stroke="#111" stroke-width="0.8"/><rect x="1" y="5.8" width="5" height="4.2" fill="#f2ee28" stroke="#111" stroke-width="0.8"/><path d="M5.5 1 V10" stroke="#e81818" stroke-width="0.8"/></svg><div class="m" style="left:46px;top:37.97px">配合<i>:5</i></div>
<svg class="a" style="left:31px;top:51.46px" width="12" height="11" viewBox="0 0 12 11"><rect x="1" y="3.5" width="3.5" height="6.5" fill="#f2ee28" stroke="#111" stroke-width="0.8"/><circle cx="2.7" cy="1.5" r="1" fill="#111"/><circle cx="8.5" cy="7.5" r="2" fill="#9ac0f0" stroke="#111" stroke-width="0.7"/><path d="M6 3 Q8.5 0.5 11 3" stroke="#e81818" stroke-width="0.9" fill="none"/></svg><div class="m" style="left:46px;top:50.46px">转动<i>/</i>平动<i>:1 (54.978 mr</i></div>
<svg class="a" style="left:31px;top:63.95px" width="12" height="11" viewBox="0 0 12 11"><circle cx="4" cy="6" r="3.3" fill="#f2ee28" stroke="#111" stroke-width="0.8"/><rect x="8" y="1.5" width="3" height="9" fill="#9ac0f0" stroke="#111" stroke-width="0.7"/><path d="M7.6 0.5 V11" stroke="#e81818" stroke-width="0.8"/></svg><div class="m" style="left:46px;top:62.95px">相切<i>:1</i></div>
<svg class="a" style="left:15.5px;top:76.44px" width="12" height="11" viewBox="0 0 12 11"><path d="M0.7 3.5 L3 1 H11 V7.5 L8.5 10.3 H0.7 Z" fill="#f2ee28" stroke="#111" stroke-width="0.9"/><path d="M0.7 3.5 H8.5 L11 1 M8.5 3.5 V10.3" fill="none" stroke="#111" stroke-width="0.7"/></svg><div class="m" style="left:31px;top:75.44px">齿条按钮<i>:1</i></div>
<svg class="a" style="left:30.5px;top:89.43px" width="13" height="10" viewBox="0 0 13 10"><path d="M0.6 9.3 V1.5 H4.5 L5.5 3 H10 V4.5" fill="#f6e878" stroke="#555" stroke-width="0.8"/><path d="M0.6 9.3 L3 4.5 H12.3 L10 9.3 Z" fill="#f2dc60" stroke="#555" stroke-width="0.8"/></svg><div class="m" style="left:46px;top:87.93px">原始坐标系</div>
<svg class="a" style="left:46px;top:100.42px" width="12" height="13" viewBox="0 0 12 13"><path d="M4 4 L10.5 1.5 V9 L4 11.5 Z" fill="#fff" stroke="#222" stroke-width="0.8"/><path d="M1 5 L7 2.5 V10 L1 12.3 Z" fill="#d0d0d0" fill-opacity="0.85" stroke="#222" stroke-width="0.8"/></svg><div class="m" style="left:60px;top:100.42px"><i style="letter-spacing:0;word-spacing:0">YZ </i>平面</div>
<svg class="a" style="left:46px;top:112.91px" width="12" height="13" viewBox="0 0 12 13"><path d="M4 4 L10.5 1.5 V9 L4 11.5 Z" fill="#fff" stroke="#222" stroke-width="0.8"/><path d="M1 5 L7 2.5 V10 L1 12.3 Z" fill="#d0d0d0" fill-opacity="0.85" stroke="#222" stroke-width="0.8"/></svg><div class="m" style="left:60px;top:112.91px"><i style="letter-spacing:0;word-spacing:0">XZ </i>平面</div>
<svg class="a" style="left:46px;top:125.4px" width="12" height="13" viewBox="0 0 12 13"><path d="M4 4 L10.5 1.5 V9 L4 11.5 Z" fill="#fff" stroke="#222" stroke-width="0.8"/><path d="M1 5 L7 2.5 V10 L1 12.3 Z" fill="#d0d0d0" fill-opacity="0.85" stroke="#222" stroke-width="0.8"/></svg><div class="m" style="left:60px;top:125.4px"><i style="letter-spacing:0;word-spacing:0">XY </i>平面</div>
<svg class="a" style="left:46px;top:138.39px" width="12" height="12" viewBox="0 0 12 12"><path d="M1 4.5 L7 1.5 V8.5 L1 11 Z" fill="#fff" stroke="#222" stroke-width="0.8"/><path d="M7 6 L11 10.5" fill="none" stroke="#666" stroke-width="0.7"/></svg><div class="m" style="left:60px;top:137.89px"><i style="letter-spacing:0;word-spacing:0.8px">X </i>轴</div>
<svg class="a" style="left:46px;top:150.88px" width="12" height="12" viewBox="0 0 12 12"><path d="M1 4.5 L7 1.5 V8.5 L1 11 Z" fill="#fff" stroke="#222" stroke-width="0.8"/><path d="M7 6 L11 10.5" fill="none" stroke="#666" stroke-width="0.7"/></svg><div class="m" style="left:60px;top:150.38px"><i style="letter-spacing:0;word-spacing:0.8px">Y </i>轴</div>
<svg class="a" style="left:46px;top:163.37px" width="12" height="12" viewBox="0 0 12 12"><path d="M1 4.5 L7 1.5 V8.5 L1 11 Z" fill="#fff" stroke="#222" stroke-width="0.8"/><path d="M7 6 L11 10.5" fill="none" stroke="#666" stroke-width="0.7"/></svg><div class="m" style="left:60px;top:162.87px"><i style="letter-spacing:0;word-spacing:0.8px">Z </i>轴</div>
<svg class="a" style="left:47px;top:176.36px" width="11" height="11" viewBox="0 0 11 11"><path d="M5.5 0.5 V10.5 M0.5 5.5 H10.5" stroke="#999" stroke-width="0.6"/><circle cx="5.5" cy="5.5" r="2.6" fill="#b8b8b8" stroke="#777" stroke-width="0.6"/></svg><div class="m" style="left:60px;top:175.36px">原点</div>
<svg class="a" style="left:29.5px;top:188.85px" width="14" height="11" viewBox="0 0 14 11"><path d="M0.8 6 L7 4 L12.5 6.5 L5.5 9.5 Z" fill="#fff" stroke="#222" stroke-width="0.8"/><path d="M5 7 L12.5 0.8 L13.5 2 L6 8 Z" fill="#ddd" stroke="#222" stroke-width="0.6"/><path d="M2 8.5 H8 M3 10.3 H9" stroke="#222" stroke-width="0.7"/></svg><div class="m" style="left:46px;top:187.85px">草图<i>2</i></div>
<svg class="a" style="left:31px;top:201.34px" width="11" height="11" viewBox="0 0 11 11"><rect x="2.5" y="0.8" width="5.5" height="4" fill="#f2ee28" stroke="#111" stroke-width="0.8"/><rect x="2.5" y="5.8" width="5.5" height="4.2" fill="#8ac8f8" stroke="#111" stroke-width="0.8"/><path d="M8.5 0.5 V10.5" stroke="#e81818" stroke-width="0.8"/></svg><div class="m" style="left:46px;top:200.34px">表面齐平<i>:2</i></div>
<svg class="a" style="left:31px;top:213.83px" width="11" height="11" viewBox="0 0 11 11"><path d="M5 1.5 L9 3 L7 7 L3 5 Z" fill="#f2ee28" stroke="#111" stroke-width="0.8"/><rect x="1.5" y="6.5" width="4.5" height="3.5" fill="#9ac0f0" stroke="#111" stroke-width="0.7"/><path d="M8 0.8 Q10.5 3 9 6" stroke="#e81818" stroke-width="0.9" fill="none"/></svg><div class="m" style="left:46px;top:212.83px">角度<i>:1 (0.00 deg)</i></div>
<svg class="a" style="left:31px;top:226.32px" width="12" height="11" viewBox="0 0 12 11"><rect x="1" y="3.5" width="3.5" height="6.5" fill="#f2ee28" stroke="#111" stroke-width="0.8"/><circle cx="2.7" cy="1.5" r="1" fill="#111"/><circle cx="8.5" cy="7.5" r="2" fill="#9ac0f0" stroke="#111" stroke-width="0.7"/><path d="M6 3 Q8.5 0.5 11 3" stroke="#e81818" stroke-width="0.9" fill="none"/></svg><div class="m" style="left:46px;top:225.32px">转动<i>/</i>平动<i>:1 (54.978 mr</i></div>
<svg class="a" style="left:31px;top:238.81px" width="12" height="11" viewBox="0 0 12 11"><circle cx="4" cy="6" r="3.3" fill="#f2ee28" stroke="#111" stroke-width="0.8"/><rect x="8" y="1.5" width="3" height="9" fill="#9ac0f0" stroke="#111" stroke-width="0.7"/><path d="M7.6 0.5 V11" stroke="#e81818" stroke-width="0.8"/></svg><div class="m" style="left:46px;top:237.81px">相切<i>:1</i></div>
</div>
<div class="a" style="left:48px;top:297.3px;width:96px;height:9.7px;border:1px solid #e82020"></div>
<div class="a" style="left:149.5px;top:271px;width:13px;height:254.5px;background:#f3f2ec"></div>
<svg class="a" style="left:150.5px;top:272.8px" width="11" height="11.5" viewBox="0 0 11 11.5"><rect x="0.5" y="0.5" width="10" height="10.5" rx="1.5" fill="#c3d2fb" stroke="#fff" stroke-width="0.8"/><rect x="1" y="1" width="9" height="9.5" rx="1.5" fill="none" stroke="#a8b8e8" stroke-width="0.6"/><path d="M3 7.5 L6 4.5 L9 7.5" transform="translate(-0.5,-0.25)" fill="none" stroke="#4d6185" stroke-width="1.7"/></svg>
<svg class="a" style="left:150.5px;top:513.3px" width="11" height="11.8" viewBox="0 0 11 11.8"><rect x="0.5" y="0.5" width="10" height="10.8" rx="1.5" fill="#c3d2fb" stroke="#fff" stroke-width="0.8"/><rect x="1" y="1" width="9" height="9.8" rx="1.5" fill="none" stroke="#a8b8e8" stroke-width="0.6"/><path d="M3 4.5 L6 7.5 L9 4.5" transform="translate(-0.5,-0.09999999999999964)" fill="none" stroke="#4d6185" stroke-width="1.7"/></svg>
<div class="a" style="left:150.7px;top:422px;width:10.6px;height:89.3px;background:#c6d3f7;border:1px solid #fff;border-radius:2px;box-shadow:inset -1px 0 0 #a8b8e8"></div>
<div class="a" style="left:153.5px;top:463.5px;width:5px;height:6px;background:repeating-linear-gradient(#eef4fe 0,#eef4fe 0.8px,#8cb0f8 0.8px,#8cb0f8 1.6px)"></div>
<div class="a" style="left:3px;top:525.5px;width:159.5px;height:13px;background:#f3f2ec"></div>
<svg class="a" style="left:3.2px;top:526.5px" width="11.8" height="11.5" viewBox="0 0 11.8 11.5"><rect x="0.5" y="0.5" width="10.8" height="10.5" rx="1.5" fill="#c3d2fb" stroke="#fff" stroke-width="0.8"/><rect x="1" y="1" width="9.8" height="9.5" rx="1.5" fill="none" stroke="#a8b8e8" stroke-width="0.6"/><path d="M7.5 3 L4.5 6 L7.5 9" transform="translate(-0.09999999999999964,-0.25)" fill="none" stroke="#4d6185" stroke-width="1.7"/></svg>
<svg class="a" style="left:136.2px;top:526.5px" width="11.8" height="11.5" viewBox="0 0 11.8 11.5"><rect x="0.5" y="0.5" width="10.8" height="10.5" rx="1.5" fill="#c3d2fb" stroke="#fff" stroke-width="0.8"/><rect x="1" y="1" width="9.8" height="9.5" rx="1.5" fill="none" stroke="#a8b8e8" stroke-width="0.6"/><path d="M4.5 3 L7.5 6 L4.5 9" transform="translate(-0.09999999999999964,-0.25)" fill="none" stroke="#4d6185" stroke-width="1.7"/></svg>
<div class="a" style="left:17px;top:526.7px;width:103px;height:11px;background:#c6d3f7;border:1px solid #fff;border-radius:2px;box-shadow:inset 0 -1px 0 #a8b8e8"></div>
<div class="a" style="left:65px;top:529.5px;width:6px;height:5px;background:repeating-linear-gradient(90deg,#eef4fe 0,#eef4fe 0.8px,#8cb0f8 0.8px,#8cb0f8 1.6px)"></div>
<div class="a" style="left:149.5px;top:525.5px;width:13px;height:13px;background:#ece9d8"></div>
<div class="a" style="left:2.2px;top:270.8px;width:161px;height:1px;background:#2a2a2a"></div>
<div class="a" style="left:2.2px;top:538.6px;width:161px;height:1px;background:#2a2a2a"></div>
<div class="a" style="left:2.2px;top:270.8px;width:1px;height:268.8px;background:#2a2a2a"></div>
<div class="a" style="left:162.2px;top:270.8px;width:1px;height:268.8px;background:#2a2a2a"></div>
<div class="a" style="left:458.5px;top:65.3px;width:253px;height:126.3px;background:#0831d9;border-radius:3px 3px 0 0"></div>
<div class="a" style="left:459.3px;top:65.8px;width:251.4px;height:15.5px;background:linear-gradient(#2a7af0 0,#0a5de6 18%,#0656e0 55%,#0a60ea 85%,#0a52d8 100%);border-radius:2.5px 2.5px 0 0"></div>
<div class="a" style="left:461.2px;top:81px;width:247.6px;height:108px;background:#ece9d8"></div>
<div class="t" style="left:461px;top:69.6px;font-weight:bold;color:#fff;font-family:'Liberation Mono','Noto Sans CJK SC',monospace;font-size:10px">驱动约束</div>
<div class="t" style="left:525.7px;top:69.6px;font-weight:bold;color:#fff;font-family:'Liberation Mono','Noto Sans CJK SC',monospace;font-size:9.6px;letter-spacing:-0.58px">( -78 deg )</div>
<svg class="a" style="left:696.5px;top:68.3px" width="11" height="11" viewBox="0 0 11 11"><rect x="0.5" y="0.5" width="10" height="10" rx="1.5" fill="#dc4a2c" stroke="#fff" stroke-width="0.9"/><path d="M3 3 L8 8 M8 3 L3 8" stroke="#fff" stroke-width="1.4"/></svg>
<div class="t" style="left:467.2px;top:87.8px">起始位置</div>
<div class="t" style="left:545.2px;top:87.8px">终止位置</div>
<div class="t" style="left:622.8px;top:87.8px">暂停延迟</div>
<div class="sunk" style="left:467.2px;top:101px;width:69px;height:15px"></div><div class="m" style="left:469px;top:102.8px"><i style="letter-spacing:0.15px">0.00 deg</i></div><div class="btn" style="left:522.9000000000001px;top:102.5px;width:12px;height:12.3px"></div><svg class="a" style="left:526.7px;top:105.6px" width="5" height="6.5" viewBox="0 0 5 6.5"><path d="M0.5 0.3 L4.3 3.2 L0.5 6.2 Z" fill="#000"/></svg>
<div class="sunk" style="left:545.3px;top:101px;width:69.3px;height:15px"></div><div class="m" style="left:547.0999999999999px;top:102.8px"><i style="letter-spacing:0.15px">-180.00 deg</i></div><div class="btn" style="left:601.3px;top:102.5px;width:12px;height:12.3px"></div><svg class="a" style="left:605.0999999999999px;top:105.6px" width="5" height="6.5" viewBox="0 0 5 6.5"><path d="M0.5 0.3 L4.3 3.2 L0.5 6.2 Z" fill="#000"/></svg>
<div class="sunk" style="left:622.8px;top:101px;width:69.5px;height:15px"></div><div class="m" style="left:624.5999999999999px;top:102.8px"><i style="letter-spacing:0.15px">0.000 s</i></div>
<div class="a" style="left:467.5px;top:125.8px;width:18px;height:18px;background:#000"></div><div class="btn" style="left:468.5px;top:126.8px;width:16px;height:16px"></div><div class="a" style="left:470.5px;top:128.8px;width:11.5px;height:11.5px;border:0.8px dotted #000"></div><svg class="a" style="left:467.5px;top:125.8px" width="18" height="18" viewBox="0 0 18 18"><path d="M6.5 4.5 L12 9 L6.5 13.5 Z" fill="#000"/><rect x="5" y="4.5" width="1.2" height="9" fill="#000"/></svg>
<div class="btn" style="left:486px;top:125.8px;width:18px;height:18px"></div><svg class="a" style="left:486px;top:125.8px" width="18" height="18" viewBox="0 0 18 18"><path d="M11.5 4.5 L6 9 L11.5 13.5 Z" fill="#000"/></svg>
<div class="btn" style="left:504px;top:125.8px;width:18px;height:18px"></div><svg class="a" style="left:504px;top:125.8px" width="18" height="18" viewBox="0 0 18 18"><rect x="7" y="7" width="4" height="4" fill="#000"/></svg>
<div class="btn" style="left:538.5px;top:125.8px;width:18.7px;height:18px"></div><svg class="a" style="left:538.5px;top:125.8px" width="18.7" height="18" viewBox="0 0 18.7 18"><rect x="4" y="5" width="1.8" height="8.5" fill="#000"/><path d="M10.5 5 L6 9.2 L10.5 13.5 Z M15 5 L10.5 9.2 L15 13.5 Z" fill="#000"/></svg>
<div class="btn" style="left:557.2px;top:125.8px;width:18.4px;height:18px"></div><svg class="a" style="left:557.2px;top:125.8px" width="18.4" height="18" viewBox="0 0 18.4 18"><path d="M9.3 5 L4.5 9.2 L9.3 13.5 Z M14 5 L9.3 9.2 L14 13.5 Z" fill="#000"/></svg>
<div class="btn" style="left:575.6px;top:125.8px;width:18.4px;height:18px"></div><svg class="a" style="left:575.6px;top:125.8px" width="18.4" height="18" viewBox="0 0 18.4 18"><path d="M4.5 5 L9.3 9.2 L4.5 13.5 Z M9.3 5 L14 9.2 L9.3 13.5 Z" fill="#000"/></svg>
<div class="btn" style="left:594px;top:125.8px;width:18.7px;height:18px"></div><svg class="a" style="left:594px;top:125.8px" width="18.7" height="18" viewBox="0 0 18.7 18"><path d="M3.5 5 L8 9.2 L3.5 13.5 Z M8 5 L12.5 9.2 L8 13.5 Z" fill="#000"/><rect x="12.7" y="5" width="1.8" height="8.5" fill="#000"/></svg>
<div class="btn" style="left:486px;top:148.4px;width:18px;height:18px"></div>
<svg class="a" style="left:491px;top:153.2px" width="8" height="8" viewBox="0 0 8 8"><circle cx="4" cy="4" r="3.2" fill="#fff" stroke="#e02020" stroke-width="0.9"/><circle cx="4" cy="4" r="1.6" fill="#e02020"/></svg>
<div class="sunk" style="left:519.2px;top:153.8px;width:9.4px;height:9.4px"></div>
<svg class="a" style="left:520.7px;top:155.3px" width="7" height="7" viewBox="0 0 7 7"><path d="M0.8 3 L2.7 5.2 L6 1.2" fill="none" stroke="#000" stroke-width="1.5"/></svg>
<div class="t" style="left:532.7px;top:153.1px">在录像时最小化对话框</div>
<div class="btn" style="left:467.5px;top:168.7px;width:18.5px;height:15.3px"></div>
<svg class="a" style="left:470.8px;top:170.7px" width="12" height="12" viewBox="0 0 12 12"><path d="M1 0.8 H10.5 V8.5 H7.5 L7 10.8 L5.5 8.5 H1 Z" fill="#ffff9c" stroke="#222" stroke-width="0.9"/><text x="5.8" y="7.3" font-family="Liberation Sans,sans-serif" font-size="7.5" font-weight="bold" text-anchor="middle" fill="#1a2ab0">?</text></svg>
<div class="btn" style="left:558.7px;top:168.7px;width:56.7px;height:15.3px"></div><div class="t" style="left:558.7px;top:171.4px;width:56.7px;text-align:center">确定</div>
<div class="btn" style="left:622.8px;top:168.7px;width:57.7px;height:15.3px"></div><div class="t" style="left:622.8px;top:171.4px;width:57.7px;text-align:center">取消</div>
<div class="btn" style="left:685.2px;top:168.7px;width:18.6px;height:15.3px"></div>
<svg class="a" style="left:689.5px;top:172.2px" width="10" height="8" viewBox="0 0 10 8"><path d="M1 0.8 L4.5 4 L1 7.2 M5 0.8 L8.5 4 L5 7.2" fill="none" stroke="#000" stroke-width="0.9"/></svg>
<div class="a" style="left:0;top:560px;width:800px;height:17px;background:#ece9d8"></div>
<div class="a" style="left:0;top:559.3px;width:167px;height:1px;background:#b8b5a6"></div>
<div class="a" style="left:0;top:560.2px;width:800px;height:1px;background:#fbfaf5"></div>
<div class="t" style="left:1.5px;top:563.5px;font-size:9.6px">就绪</div>
<div class="a" style="left:695px;top:562.5px;width:1px;height:13px;background:#c8c5b5"></div><div class="t" style="left:699.5px;top:563.2px"><i>0</i></div>
<div class="a" style="left:723px;top:562.5px;width:29.5px;height:13px;border:1px solid;border-color:#aca899 #fff #fff #aca899"></div>
<div class="t" style="left:731px;top:563.2px"><i style="font-size:8.8px">12</i></div>
<div class="a" style="left:753.5px;top:563px;width:28px;height:12.5px;background:#000;border:1px solid;border-color:#aca899 #fff #fff #aca899"></div>
<div class="a" style="left:754.5px;top:564px;width:5px;height:10.5px;background:#00e000"></div>
<svg class="a" style="left:785.5px;top:563px" width="12" height="13" viewBox="0 0 12 13"><ellipse cx="5" cy="4.5" rx="4" ry="3.5" fill="#d8e4f8" stroke="#456" stroke-width="0.8"/><path d="M2 3 L8 6 M5 1 V8" stroke="#456" stroke-width="0.6"/><path d="M5 8 L3 12 H9 Z" fill="#889" stroke="#456" stroke-width="0.5"/><path d="M7 2 L11 0.8" stroke="#c33" stroke-width="0.9"/></svg>
<div class="a" style="left:661px;top:550px;width:57.5px;height:20.5px;background:linear-gradient(#3a74ec,#2456d8 50%,#1f4fd0);border:1px solid #4a80f0"></div>
<div class="a" style="left:664px;top:554px;width:1.5px;height:12px;background:repeating-linear-gradient(#8ab0ff 0,#8ab0ff 1.2px,transparent 1.2px,transparent 3px)"></div>
<svg class="a" style="left:671px;top:554.5px" width="13" height="11" viewBox="0 0 13 11"><rect x="0.5" y="3.5" width="12" height="6.5" rx="1" fill="#e8e8e8" stroke="#222" stroke-width="0.8"/><path d="M2 5.5 H11 M2 7.5 H11" stroke="#444" stroke-width="0.9" stroke-dasharray="1.2 0.7"/><path d="M4 3.5 Q4 1 7 1.5" fill="none" stroke="#222" stroke-width="0.7"/></svg>
<svg class="a" style="left:689px;top:553.5px" width="12" height="13" viewBox="0 0 12 13"><path d="M1 0.8 H10.5 V9 H7.5 L7 11.8 L5.5 9 H1 Z" fill="#ffffc8" stroke="#222" stroke-width="0.9"/><text x="5.8" y="7.6" font-family="Liberation Sans,sans-serif" font-size="7.5" font-weight="bold" text-anchor="middle" fill="#1a2ab0">?</text></svg>
<svg class="a" style="left:708.5px;top:554.5px" width="6" height="12" viewBox="0 0 6 12"><rect x="1" y="1.5" width="3.5" height="1.2" fill="#fff"/><path d="M0.8 7.5 H5 L2.9 10 Z" fill="#fff"/></svg>
<div class="a" style="left:0;top:577px;width:800px;height:23px;background:linear-gradient(#3168d5 0,#4993e6 1.5px,#2663e0 4px,#245edb 10px,#2359d2 19px,#1941a5 23px)"></div>
<div class="a" style="left:0;top:577px;width:75px;height:23px;background:linear-gradient(#2e7a2e 0,#4aa24a 2.5px,#3f983f 6px,#3a903a 13px,#2f7f2f 20px,#286f28 23px);border-radius:0 9px 9px 0/0 12px 12px 0;box-shadow:inset -2px -1px 2px rgba(0,40,0,0.5),inset 0 1.5px 1px rgba(255,255,255,0.35),1.5px 0 2px rgba(0,0,60,0.5)"></div>
<svg class="a" style="left:7.5px;top:579.5px" width="17" height="16" viewBox="0 0 17 16"><path d="M3 2.5 Q6 0.5 8.5 2.5 L7.3 7.5 Q4.5 5.8 1.7 7.5 Z" fill="#f0602a"/><path d="M9.5 3 Q12.5 5 15.8 3 L14.5 8 Q11.5 9.8 8.3 8 Z" fill="#8ac840"/><path d="M1.5 8.5 Q4.3 7 7 8.5 L5.8 13.5 Q3 12 0.3 13.5 Z" fill="#3a8af0"/><path d="M8 9 Q11 10.8 14.3 9 L13 14 Q10 15.8 6.8 14 Z" fill="#fcd428"/></svg>
<div class="t" style="left:29.5px;top:581.3px;height:15px;line-height:15px;color:#fff;font-style:italic;font-weight:400;font-size:13.8px;font-family:'Liberation Sans','Noto Sans CJK SC',sans-serif;text-shadow:1px 1px 1px rgba(0,0,0,0.45);transform:skewX(-8deg)">开始</div>
<div class="a" style="left:82.5px;top:579.5px;width:125px;height:18.5px;background:linear-gradient(#1840a8 0,#1c4cc0 2px,#1e52c8 10px,#2056cc 16px,#2258d0 18.5px);border-radius:2px;box-shadow:inset 1px 1px 1px rgba(0,0,40,0.4)"></div>
<svg class="a" style="left:91px;top:582.3px" width="12.4" height="12.4" viewBox="0 0 12.4 12.4"><rect x="0.4" y="0.4" width="11.6" height="11.6" fill="#f0a010" stroke="#e8d8b0" stroke-width="0.8"/><rect x="6.5" y="3" width="4" height="5.5" rx="1" fill="#5a5a5a"/><ellipse cx="4" cy="6.5" rx="3" ry="2.6" fill="#c8c8c8" stroke="#666" stroke-width="0.6"/><ellipse cx="4" cy="6.5" rx="1.2" ry="1" fill="#777"/><ellipse cx="8" cy="5.8" rx="1.6" ry="2" fill="#aaa"/></svg>
<div class="t" style="left:107px;top:582.8px;color:#fff;font-family:'Liberation Mono',monospace;font-size:8.2px;letter-spacing:-0.4px">Autodesk Invento...</div>
<div class="a" style="left:710px;top:577px;width:90px;height:23px;background:linear-gradient(#1a9af0 0,#1290ea 3px,#0f88e2 12px,#0e7fd8 20px,#0a66b8 23px);box-shadow:inset 1px 0 0 #0a58b0,inset 2px 0 1px rgba(120,200,255,0.5)"></div>
<svg class="a" style="left:703.5px;top:581px" width="15" height="15" viewBox="0 0 15 15"><circle cx="7.5" cy="7.5" r="6.8" fill="#2a78e8" stroke="#9ac8ff" stroke-width="0.8"/><circle cx="7.5" cy="7.5" r="5.5" fill="#1a60d8"/><path d="M9 4.3 L5.8 7.5 L9 10.7" fill="none" stroke="#fff" stroke-width="1.6"/></svg>
<svg class="a" style="left:721px;top:582px" width="13" height="13" viewBox="0 0 13 13"><path d="M1.5 1 H11.5 V6 Q11.5 10.5 6.5 12.3 Q1.5 10.5 1.5 6 Z" fill="#e84a2a" stroke="#fff" stroke-width="0.8"/><path d="M6.5 1 V12 M1.5 6 H11.5" stroke="#fff" stroke-width="0.7"/><rect x="6.8" y="1.5" width="4.3" height="4.3" fill="#3a8ae8"/><rect x="2" y="6.3" width="4.3" height="4" fill="#fcd116"/></svg>
<svg class="a" style="left:736px;top:582px" width="11" height="13" viewBox="0 0 11 13"><path d="M1 1.5 Q5.5 0 10 1.5 V6.5 Q10 10.5 5.5 12.5 Q1 10.5 1 6.5 Z" fill="#f8d020" stroke="#8a6a10" stroke-width="0.8"/><rect x="4.8" y="3.5" width="1.5" height="4.5" fill="#222"/><rect x="4.8" y="9" width="1.5" height="1.5" fill="#222"/></svg>
<svg class="a" style="left:749px;top:582px" width="14" height="13" viewBox="0 0 14 13"><rect x="4.5" y="0.8" width="8.5" height="6.5" fill="#b8c8e8" stroke="#334" stroke-width="0.8"/><rect x="0.8" y="4.5" width="8.5" height="6.5" fill="#c8d8f0" stroke="#334" stroke-width="0.8"/><rect x="2" y="5.8" width="6" height="4" fill="#2a4a9a"/><rect x="2.5" y="11.3" width="5" height="1.2" fill="#556"/></svg>
<div class="t" style="left:768px;top:583px;color:#fff;font-family:'Liberation Sans',sans-serif;font-size:8.6px;letter-spacing:0.7px">8:40</div>
</div>
</body>
</html>
